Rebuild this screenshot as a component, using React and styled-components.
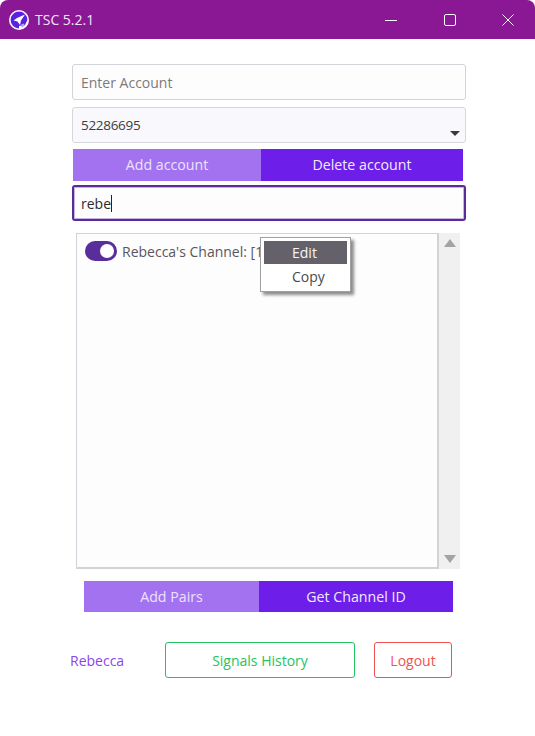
import React from 'react'
import styled, { createGlobalStyle } from 'styled-components'

const GlobalStyle = createGlobalStyle`
  html, body { margin: 0; padding: 0; background: #ffffff; }
  body { font-family: "Open Sans", "Noto Sans", sans-serif; }
`

export default function App() {
  return (
    <Window>
      <GlobalStyle />
      <TitleBar>
        <AppLogo viewBox="0 0 20 20">
          <circle cx="10" cy="10" r="10" fill="#ffffff" />
          <path d="M10 1.6 A8.4 8.4 0 1 0 10 18.4 L10 16 L16 15 L18.4 10 A8.4 8.4 0 0 0 10 1.6 Z" fill="#5a22e0" />
          <path d="M16 4.5 L8 8 L4.6 10.5 L8.5 11.5 L11 15 L12 10.5 Z" fill="#ffffff" />
          <path d="M11.5 15 L14.5 13.5 L16 15.5 L13 17.5 Z" fill="#b9a0f5" />
        </AppLogo>
        <AppTitle>TSC 5.2.1</AppTitle>
        <WindowControls>
          <ControlButton>
            <svg width="12" height="12" viewBox="0 0 12 12"><path d="M0 6.5 H12" stroke="#fff" strokeWidth="1" /></svg>
          </ControlButton>
          <ControlButton>
            <svg width="12" height="12" viewBox="0 0 12 12"><rect x="0.5" y="0.5" width="11" height="11" rx="1.5" fill="none" stroke="#fff" strokeWidth="1" /></svg>
          </ControlButton>
          <ControlButton>
            <svg width="12" height="12" viewBox="0 0 12 12"><path d="M0.5 0.5 L11.5 11.5 M11.5 0.5 L0.5 11.5" stroke="#fff" strokeWidth="1" /></svg>
          </ControlButton>
        </WindowControls>
      </TitleBar>

      <Content>
        <TextField placeholder="Enter Account" readOnly />
        <SelectBox>
          <span>52286695</span>
          <SelectArrow />
        </SelectBox>
        <ButtonPair $width={390} $top={6} $left={1} $height={32} $split={188}>
          <PairButton>Add account</PairButton>
          <PairButton $dark>Delete account</PairButton>
        </ButtonPair>
        <SearchBox>
          rebe<Caret />
        </SearchBox>

        <ListArea>
          <ChannelList>
            <ChannelRow>
              <Toggle><Knob /></Toggle>
              <ChannelName>Rebecca's Channel: [1</ChannelName>
            </ChannelRow>
            <ContextMenu>
              <MenuItem $active>Edit</MenuItem>
              <MenuItem>Copy</MenuItem>
            </ContextMenu>
          </ChannelList>
          <ScrollTrack>
            <ScrollArrow $up />
            <ScrollArrow />
          </ScrollTrack>
        </ListArea>

        <ButtonPair $width={369} $top={12} $left={12} $height={31} $split={175}>
          <PairButton>Add Pairs</PairButton>
          <PairButton $dark>Get Channel ID</PairButton>
        </ButtonPair>

        <Footer>
          <UserName>Rebecca</UserName>
          <OutlineButton $color="#22c55e" $width={190}>Signals History</OutlineButton>
          <OutlineButton $color="#f05252" $width={78}>Logout</OutlineButton>
        </Footer>
      </Content>
    </Window>
  )
}

const Window = styled.div`
  width: 535px;
  height: 736px;
  overflow: hidden;
  background: #ffffff;
`

const TitleBar = styled.div`
  height: 39px;
  display: flex;
  align-items: center;
  padding-left: 9px;
  background: #8a1794;
  border-radius: 8px 8px 0 0;
  color: #ffffff;
`

const AppLogo = styled.svg`
  width: 20px;
  height: 20px;
  flex: none;
`

const AppTitle = styled.div`
  margin-left: 6px;
  font-size: 14px;
  color: #f4e6f6;
`

const WindowControls = styled.div`
  margin-left: auto;
  display: flex;
  gap: 4.5px;
`

const ControlButton = styled.div`
  width: 54px;
  height: 39px;
  display: flex;
  align-items: center;
  justify-content: center;
`

const Content = styled.div`
  display: flex;
  flex-direction: column;
  align-items: flex-start;
  padding: 25px 0 0 72px;
`

const TextField = styled.input`
  box-sizing: border-box;
  width: 394px;
  height: 36px;
  padding: 0 8px;
  border: 1px solid #d3d3da;
  border-radius: 3px;
  background: #fdfdfe;
  font-family: inherit;
  font-size: 14px;
  outline: none;

  &::placeholder { color: #80797a; opacity: 1; }
`

const SelectBox = styled.div`
  position: relative;
  box-sizing: border-box;
  width: 394px;
  height: 36px;
  margin-top: 7px;
  padding-left: 8px;
  display: flex;
  align-items: center;
  border: 1px solid #d6d6dc;
  border-radius: 3px;
  background: #f8f8fd;
  font-size: 13.5px;
  letter-spacing: -0.3px;
  color: #3c3c3c;
`

const SelectArrow = styled.div`
  position: absolute;
  right: 5px;
  bottom: 6px;
  border-left: 5px solid transparent;
  border-right: 5px solid transparent;
  border-top: 5px solid #3a3a3a;
`

const ButtonPair = styled.div`
  display: grid;
  grid-template-columns: ${p => p.$split}px 1fr;
  width: ${p => p.$width}px;
  height: ${p => p.$height}px;
  margin-top: ${p => p.$top}px;
  margin-left: ${p => p.$left}px;
`

const PairButton = styled.div`
  display: flex;
  align-items: center;
  justify-content: center;
  padding-bottom: 1px;
  background: ${p => (p.$dark ? '#6d1ee8' : '#a372f1')};
  color: ${p => (p.$dark ? '#f2eaff' : '#ece2fc')};
  font-size: 14.2px;
`

const SearchBox = styled.div`
  box-sizing: border-box;
  width: 394px;
  height: 36px;
  margin-top: 4px;
  padding-left: 7px;
  display: flex;
  align-items: center;
  border: 2px solid #5b2b9a;
  outline: 1px solid rgba(91, 43, 154, 0.35);
  outline-offset: -3px;
  border-radius: 3px;
  background: #fdfdfe;
  font-size: 14px;
  color: #2b2b2b;
`

const Caret = styled.span`
  display: inline-block;
  width: 1px;
  height: 17px;
  background: #222222;
`

const ListArea = styled.div`
  display: flex;
  height: 336px;
  margin: 12px 0 0 4px;
`

const ChannelList = styled.div`
  position: relative;
  box-sizing: border-box;
  width: 363px;
  padding: 7px 8px;
  border: 2px solid #d2d2d8;
  border-width: 1px 2px 2px 1px;
  background: #fdfdfd;
`

const ChannelRow = styled.div`
  display: flex;
  align-items: center;
  gap: 5px;
`

const Toggle = styled.div`
  box-sizing: border-box;
  width: 32px;
  height: 20px;
  padding: 3px;
  display: flex;
  justify-content: flex-end;
  border-radius: 10px;
  background: #5a2d9c;
`

const Knob = styled.div`
  width: 14px;
  height: 14px;
  border-radius: 50%;
  background: #ffffff;
`

const ChannelName = styled.div`
  font-size: 14px;
  color: #5a5560;
  white-space: nowrap;
`

const ContextMenu = styled.div`
  position: absolute;
  left: 183px;
  top: 3px;
  box-sizing: border-box;
  width: 91px;
  height: 55px;
  padding: 3px;
  border: 1px solid #a0a0a0;
  background: #ffffff;
  box-shadow: 3px 3px 3px rgba(0, 0, 0, 0.45);
`

const MenuItem = styled.div`
  height: 23px;
  margin-bottom: 1px;
  display: flex;
  align-items: center;
  padding-left: 28px;
  font-size: 14px;
  background: ${p => (p.$active ? '#65616a' : 'transparent')};
  color: ${p => (p.$active ? '#f6f6f6' : '#4a4a4a')};
`

const ScrollTrack = styled.div`
  box-sizing: border-box;
  width: 21px;
  padding: 6px 0;
  display: flex;
  flex-direction: column;
  justify-content: space-between;
  align-items: center;
  background: #f0f0f0;
`

const ScrollArrow = styled.div`
  width: 0;
  height: 0;
  border-left: 6px solid transparent;
  border-right: 6px solid transparent;
  ${p => (p.$up ? 'border-bottom: 8px solid #a3a3a3;' : 'border-top: 8px solid #a3a3a3;')}
`

const Footer = styled.div`
  display: flex;
  align-items: center;
  margin: 30px 0 0 -2px;
`

const UserName = styled.div`
  width: 95px;
  font-size: 14px;
  color: #8b45f0;
`

const OutlineButton = styled.div`
  box-sizing: border-box;
  width: ${p => p.$width}px;
  height: 36px;
  margin-right: 19px;
  display: flex;
  align-items: center;
  justify-content: center;
  border: 1px solid ${p => p.$color};
  border-radius: 3px;
  background: #ffffff;
  color: ${p => p.$color};
  font-size: 14px;
`
